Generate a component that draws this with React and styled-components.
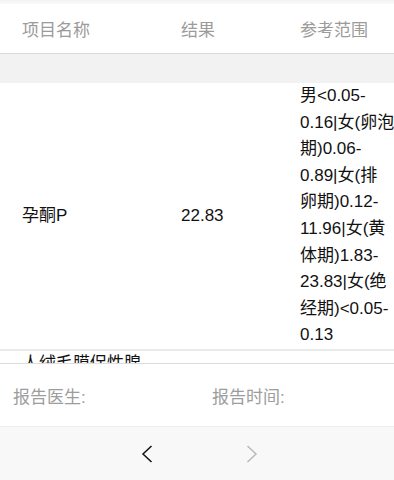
import React from "react";
import styled, { createGlobalStyle } from "styled-components";

const Global = createGlobalStyle`
  html, body { margin: 0; padding: 0; background: #fff; }
  body { font-family: "Liberation Sans", "Noto Sans CJK SC", sans-serif; }
`;

const Page = styled.div`
  width: 394px;
  height: 480px;
  display: flex;
  flex-direction: column;
  overflow: hidden;
  background: #fff;
`;

const TopShade = styled.div`
  height: 4px;
  background: linear-gradient(#f3f3f3, #fafafa);
`;

const HeaderRow = styled.div`
  height: 49px;
  display: grid;
  grid-template-columns: 159px 119px 1fr;
  align-items: center;
  padding-left: 22px;
  border-bottom: 1px solid #dadada;
  color: #9b9b9b;
  font-size: 17px;
`;

const Band = styled.div`
  height: 29px;
  background: #f2f2f2;
`;

const Scroll = styled.div`
  height: 280px;
  overflow: hidden;
  border-bottom: 1px solid #dcdcdc;
`;

const Row = styled.div`
  display: grid;
  grid-template-columns: 159px 119px 1fr;
  align-items: center;
  padding-left: 22px;
  font-size: 17px;
  line-height: 26.6px;
  color: #111;
  border-bottom: ${(p) => (p.$sep ? "2px solid #ebebeb" : "none")};
  white-space: nowrap;
`;

const Name = styled.span`
  max-width: 125px;
  white-space: normal;
`;

const Lines = styled.div`
  display: flex;
  flex-direction: column;
`;

const Footer = styled.div`
  height: 62px;
  display: grid;
  grid-template-columns: 199px 1fr;
  align-items: center;
  padding-left: 13px;
  color: #9d9d9d;
  font-size: 17px;
  border-bottom: 1px solid #ededed;
`;

const NavBar = styled.div`
  flex: 1;
  background: #f8f8f9;
  display: flex;
  align-items: center;
  justify-content: center;
  gap: 93px;
  padding-left: 5px;
`;

const NavBtn = styled.span`
  display: flex;
  color: ${(p) => (p.$disabled ? "#b9b9b9" : "#111")};
`;

const Chevron = ({ dir }) => (
  <svg width="12" height="18" viewBox="0 0 12 18" fill="none">
    <path
      d={dir === "left" ? "M10.5 1 L2 9 L10.5 17" : "M1.5 1 L10 9 L1.5 17"}
      stroke="currentColor"
      strokeWidth="1.5"
      strokeLinejoin="miter"
    />
  </svg>
);

const refLines = [
  "男<0.05-",
  "0.16|女(卵泡",
  "期)0.06-",
  "0.89|女(排",
  "卵期)0.12-",
  "11.96|女(黄",
  "体期)1.83-",
  "23.83|女(绝",
  "经期)<0.05-",
  "0.13",
];

export default function App() {
  return (
    <Page>
      <Global />
      <TopShade />
      <HeaderRow>
        <span>项目名称</span>
        <span>结果</span>
        <span>参考范围</span>
      </HeaderRow>
      <Band />
      <Scroll>
        <Row $sep>
          <Name>孕酮P</Name>
          <span>22.83</span>
          <Lines>
            {refLines.map((l) => (
              <span key={l}>{l}</span>
            ))}
          </Lines>
        </Row>
        <Row>
          <Name>人绒毛膜促性腺激素</Name>
          <span></span>
          <span></span>
        </Row>
      </Scroll>
      <Footer>
        <span>报告医生:</span>
        <span>报告时间:</span>
      </Footer>
      <NavBar>
        <NavBtn>
          <Chevron dir="left" />
        </NavBtn>
        <NavBtn $disabled>
          <Chevron dir="right" />
        </NavBtn>
      </NavBar>
    </Page>
  );
}
